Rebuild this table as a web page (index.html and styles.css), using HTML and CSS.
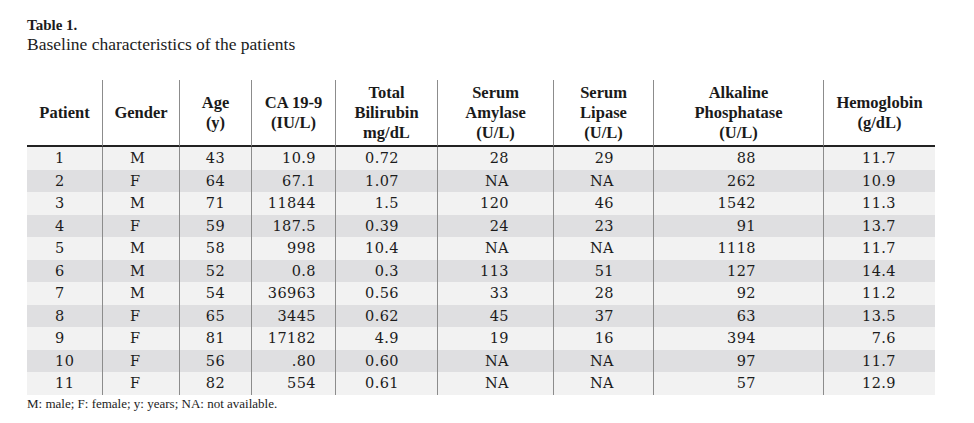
FILE: index.html
```html
<!DOCTYPE html>
<html lang="en">
<head>
<meta charset="utf-8">
<title>Table 1</title>
<link rel="stylesheet" href="styles.css">
</head>
<body>
<div class="page">
  <div class="caption">
    <div class="label">Table 1.</div>
    <div class="subtitle">Baseline characteristics of the patients</div>
  </div>
  <table class="data">
    <colgroup>
      <col class="w-pat"><col class="w-gen"><col class="w-age"><col class="w-ca"><col class="w-bil"><col class="w-amy"><col class="w-lip"><col class="w-alp"><col class="w-hgb">
    </colgroup>
    <thead>
      <tr>
        <th>Patient</th>
        <th>Gender</th>
        <th>Age<br>(y)</th>
        <th>CA 19-9<br>(IU/L)</th>
        <th>Total<br>Bilirubin<br>mg/dL</th>
        <th>Serum<br>Amylase<br>(U/L)</th>
        <th>Serum<br>Lipase<br>(U/L)</th>
        <th>Alkaline<br>Phosphatase<br>(U/L)</th>
        <th>Hemoglobin<br>(g/dL)</th>
      </tr>
    </thead>
    <tbody>
      <tr><td class="c-pat">1</td><td class="c-gen">M</td><td class="c-age">43</td><td class="c-ca">10.9</td><td class="c-bil">0.72</td><td class="c-amy">28</td><td class="c-lip">29</td><td class="c-alp">88</td><td class="c-hgb">11.7</td></tr>
      <tr><td class="c-pat">2</td><td class="c-gen">F</td><td class="c-age">64</td><td class="c-ca">67.1</td><td class="c-bil">1.07</td><td class="c-amy">NA</td><td class="c-lip">NA</td><td class="c-alp">262</td><td class="c-hgb">10.9</td></tr>
      <tr><td class="c-pat">3</td><td class="c-gen">M</td><td class="c-age">71</td><td class="c-ca">11844</td><td class="c-bil">1.5</td><td class="c-amy">120</td><td class="c-lip">46</td><td class="c-alp">1542</td><td class="c-hgb">11.3</td></tr>
      <tr><td class="c-pat">4</td><td class="c-gen">F</td><td class="c-age">59</td><td class="c-ca">187.5</td><td class="c-bil">0.39</td><td class="c-amy">24</td><td class="c-lip">23</td><td class="c-alp">91</td><td class="c-hgb">13.7</td></tr>
      <tr><td class="c-pat">5</td><td class="c-gen">M</td><td class="c-age">58</td><td class="c-ca">998</td><td class="c-bil">10.4</td><td class="c-amy">NA</td><td class="c-lip">NA</td><td class="c-alp">1118</td><td class="c-hgb">11.7</td></tr>
      <tr><td class="c-pat">6</td><td class="c-gen">M</td><td class="c-age">52</td><td class="c-ca">0.8</td><td class="c-bil">0.3</td><td class="c-amy">113</td><td class="c-lip">51</td><td class="c-alp">127</td><td class="c-hgb">14.4</td></tr>
      <tr><td class="c-pat">7</td><td class="c-gen">M</td><td class="c-age">54</td><td class="c-ca">36963</td><td class="c-bil">0.56</td><td class="c-amy">33</td><td class="c-lip">28</td><td class="c-alp">92</td><td class="c-hgb">11.2</td></tr>
      <tr><td class="c-pat">8</td><td class="c-gen">F</td><td class="c-age">65</td><td class="c-ca">3445</td><td class="c-bil">0.62</td><td class="c-amy">45</td><td class="c-lip">37</td><td class="c-alp">63</td><td class="c-hgb">13.5</td></tr>
      <tr><td class="c-pat">9</td><td class="c-gen">F</td><td class="c-age">81</td><td class="c-ca">17182</td><td class="c-bil">4.9</td><td class="c-amy">19</td><td class="c-lip">16</td><td class="c-alp">394</td><td class="c-hgb">7.6</td></tr>
      <tr><td class="c-pat">10</td><td class="c-gen">F</td><td class="c-age">56</td><td class="c-ca">.80</td><td class="c-bil">0.60</td><td class="c-amy">NA</td><td class="c-lip">NA</td><td class="c-alp">97</td><td class="c-hgb">11.7</td></tr>
      <tr><td class="c-pat">11</td><td class="c-gen">F</td><td class="c-age">82</td><td class="c-ca">554</td><td class="c-bil">0.61</td><td class="c-amy">NA</td><td class="c-lip">NA</td><td class="c-alp">57</td><td class="c-hgb">12.9</td></tr>
    </tbody>
  </table>
  <div class="footnote">M: male; F: female; y: years; NA: not available.</div>
</div>
</body>
</html>
```
FILE: styles.css
```css
html, body {
  margin: 0;
  padding: 0;
  background: #ffffff;
}

.page {
  padding: 16px 0 0 27px;
  color: #1c1c1c;
  font-family: "Liberation Serif", "Times New Roman", serif;
}

.caption {
  margin-bottom: 26px;
}

.label {
  font-weight: bold;
  font-size: 15px;
  line-height: 19px;
}

.subtitle {
  font-size: 17.5px;
  line-height: 19px;
}

.data {
  width: 908px;
  table-layout: fixed;
  border-collapse: separate;
  border-spacing: 0;
}

.w-pat { width: 76px; }
.w-gen { width: 77px; }
.w-age { width: 72px; }
.w-ca  { width: 84px; }
.w-bil { width: 102px; }
.w-amy { width: 116px; }
.w-lip { width: 100px; }
.w-alp { width: 170px; }
.w-hgb { width: 111px; }

.data th,
.data td {
  box-sizing: border-box;
  padding: 0;
  border-right: 1px solid #8c8c8c;
}

.data th:last-child,
.data td:last-child {
  border-right: none;
}

.data th {
  height: 67px;
  font-weight: bold;
  font-size: 16.5px;
  line-height: 20px;
  text-align: center;
  vertical-align: middle;
  color: #1a1a1a;
  border-bottom: 2px solid #222222;
}

.data td {
  height: 22.5px;
  font-family: "DejaVu Serif", serif;
  font-size: 14.5px;
  line-height: 22.5px;
  letter-spacing: 0.4px;
  white-space: nowrap;
  background: #f2f2f2;
}

.data tbody tr:nth-child(even) td {
  background: #dfdfe1;
}

.c-pat { text-align: left; padding-left: 28px !important; }
.c-gen { text-align: left; padding-left: 27px !important; }
.c-age { text-align: center; }
.c-ca  { text-align: right; padding-right: 19px !important; }
.c-bil { text-align: right; padding-right: 38px !important; }
.c-amy { text-align: right; padding-right: 44px !important; }
.c-lip { text-align: right; padding-right: 39px !important; }
.c-alp { text-align: right; padding-right: 67px !important; }
.c-hgb { text-align: right; padding-right: 39px !important; }

.footnote {
  margin-top: 1px;
  font-size: 13px;
  line-height: 16px;
}
```
